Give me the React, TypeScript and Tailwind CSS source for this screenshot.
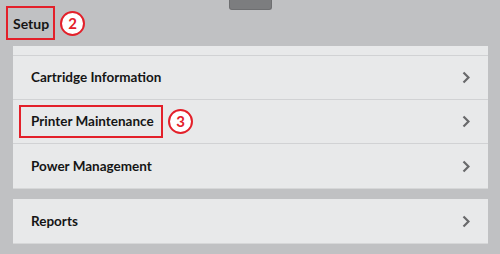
const ROWS = ["Cartridge Information", "Printer Maintenance", "Power Management"];

function Chevron() {
  return (
    <svg width="8" height="13" viewBox="0 0 8 13" className="shrink-0">
      <polyline points="1.5,1.5 6.5,6.5 1.5,11.5" fill="none" stroke="#68696b" strokeWidth="2.2" />
    </svg>
  );
}

function Marker({ n }: { n: number }) {
  return (
    <span className="flex items-center justify-center w-[25px] h-[25px] rounded-full border-2 border-[#e3202a] bg-white text-[#e3202a] text-[15px] font-bold leading-none">
      {n}
    </span>
  );
}

function Row({ label, last }: { label: string; last?: boolean }) {
  const marked = label === "Printer Maintenance";
  return (
    <div
      className={`flex items-center h-[44px] pr-[18px] ${marked ? "pl-[6px]" : "pl-[18px]"} ${
        last ? "" : "border-b border-[#d1d2d4]"
      }`}
    >
      {marked ? (
        <div className="flex items-center gap-[5px]">
          <span className="flex items-center w-[144px] h-[33px] border-2 border-[#e3202a] pl-[10px] text-[13.5px] font-bold text-[#151515]">
            {label}
          </span>
          <Marker n={3} />
        </div>
      ) : (
        <span className="text-[13.5px] font-bold text-[#151515]">{label}</span>
      )}
      <div className="flex-1" />
      <Chevron />
    </div>
  );
}

export default function App() {
  return (
    <div
      className="relative w-[500px] h-[254px] overflow-hidden bg-[#c0c1c3]"
      style={{ fontFamily: 'Lato, "Liberation Sans", sans-serif' }}
    >
      <div className="absolute top-0 left-[229px] w-[43px] h-[10px] rounded-b-[3px] bg-[#7c7d7f] border border-t-0 border-[#6e6f71]" />

      <div className="flex items-center gap-[5px] pl-[6px] pt-[6px]">
        <span className="flex items-center w-[49px] h-[34px] border-2 border-[#e3202a] pl-[5px] text-[14px] font-bold text-[#151515]">
          Setup
        </span>
        <Marker n={2} />
      </div>

      <div className="ml-[13px] mt-[6px] w-[475px] bg-[#e8e9ea] border-b border-[#d6d7d8]">
        <div className="h-[10px] border-b border-[#d1d2d4]" />
        {ROWS.map((r, i) => (
          <Row key={r} label={r} last={i === ROWS.length - 1} />
        ))}
      </div>

      <div className="ml-[13px] mt-[10px] w-[475px] bg-[#e8e9ea] border-b border-[#d6d7d8]">
        <Row label="Reports" last />
      </div>
    </div>
  );
}
